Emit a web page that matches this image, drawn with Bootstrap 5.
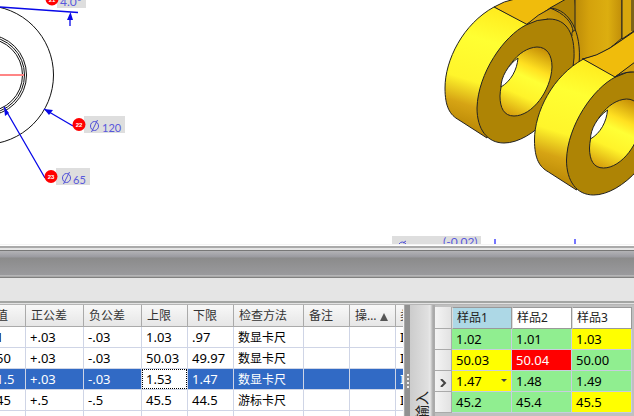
<!DOCTYPE html>
<html lang="zh-CN">
<head>
<meta charset="utf-8">
<meta name="viewport" content="width=device-width, initial-scale=1">
<title>检验数据</title>
<link href="https://cdn.jsdelivr.net/npm/bootstrap@5.3.0/dist/css/bootstrap.min.css" rel="stylesheet">
<style>
body{font-family:"Noto Sans","Noto Sans CJK SC",sans-serif;font-size:13px;line-height:16px;color:#000;background:#fff}
.viewer{height:244px;flex:none}
.viewer svg{display:block;width:100%;height:100%}
.dim{font-family:Lato,sans-serif;fill:#5858dc}
.num{font-family:"Liberation Sans",sans-serif;font-weight:bold;font-size:6px;fill:#fff;text-anchor:middle}
.trim{height:7px;flex:none;background:linear-gradient(#f4f4f4 0 1px,#fff 1px 2px,#aaa 2px 4px,#e5e5e5 4px 6px,#777 6px)}
.titlebar{height:27px;flex:none;background:linear-gradient(#b3b3b6,#9a9aa0 6px,#8b8b8b 7px,#9a9a9d 24px,#d0d0d0 25px,#808080 26px)}
.tools{height:23px;flex:none;background:#e5e5e5}
.rule{height:4px;flex:none;background:linear-gradient(#a3a5a3 0 2px,#e2e2e2 2px 3px,#b5b5b5 3px)}
.left-pane{width:405px;flex:none;border-right:1px solid #aaa;background:#f4f4f4}
.grid{table-layout:fixed;border-collapse:separate;border-spacing:0;white-space:nowrap}
.grid th,.grid td{overflow:hidden;padding:0 0 0 4px;font-weight:400}
.grid .cjk{padding-top:2px;font-size:12px}
.specs{width:403px;background:#fff}
.specs th{height:22px;padding-left:5px;font-size:12px;color:#333;background:linear-gradient(#f8f8f8,#e6e6e6);border-right:1px solid #aaa;border-bottom:1px solid #aaa}
.specs td{height:21px;border-right:1px solid #cfd5e6;border-bottom:1px solid #cfd5e6}
.specs .end{padding-left:4px;border-right:0}
.specs .first{padding-left:0}
.first span{display:block;margin-left:-4px}
.specs .picked td{background:#316ac5;color:#fff}
.specs .picked .editing{padding:0;background:#fff}
.editing input{display:block;width:100%;height:20px;padding:0 0 0 3px;border:1px dotted #000;outline:0;background:#fff;color:#000}
.sorter{display:inline-block;margin-left:3px;vertical-align:-1px}
.splitter{width:5px;flex:none;background:#919191}
.splitter i{display:block;width:2px;height:2px;margin:0 0 2px 2px;background:#eee}
.splitter i:first-child{margin-top:69px}
.side{width:24px;flex:none;padding-top:86px;background:linear-gradient(90deg,#ccc,#e0e0e0 18px,#e8e8e8 20px,#aaa 23px)}
.side button{display:block;width:16px;margin-left:4px;padding:0;border:0;background:none;color:#222;font-size:14px;line-height:16px;white-space:nowrap;writing-mode:vertical-rl;text-orientation:sideways;transform:rotate(180deg)}
.right-pane{min-width:0;padding-top:2px;border-left:1px solid #aaa;background:#c0c0c0}
.samples{width:197px}
.samples th,.samples td{height:21px;border-right:1px solid #c8cde0;border-bottom:1px solid #c8cde0;background:#90ee90}
.samples th{height:22px;font-size:12px;color:#222;background:#fff;border:1px solid #999;border-left-color:#ddd}
.samples th.on{background:#add8e6}
.samples .stub{padding:0;text-align:center;background:linear-gradient(90deg,#f4f4f4,#e2e2e2);border:0;border-right:1px solid #aaa;border-bottom:1px solid #aaa}
.samples .warn{background:#ff0}
.samples .bad{background:red;color:#fff}
.drop{width:15px;height:12px;padding:0;border:0;background:none}
.drop svg{display:block;margin:auto}
</style>
<script src="https://cdn.jsdelivr.net/npm/bootstrap@5.3.0/dist/js/bootstrap.bundle.min.js"></script>
</head>
<body>
<main class="d-flex flex-column vh-100 overflow-hidden">
<section class="viewer overflow-hidden" aria-label="图纸">
<svg viewBox="0 0 634 244" preserveAspectRatio="xMidYMin slice">
<defs>
<linearGradient id="rim" gradientUnits="userSpaceOnUse" x1="496" y1="12" x2="460" y2="128"><stop offset="0" stop-color="#ffed20"/><stop offset=".25" stop-color="#ffff32"/><stop offset=".6" stop-color="#fff52b"/><stop offset=".8" stop-color="#d6a414"/><stop offset="1" stop-color="#b98705"/></linearGradient>
<linearGradient id="bore" gradientUnits="userSpaceOnUse" x1="543" y1="48" x2="512" y2="116"><stop offset="0" stop-color="#c48c05"/><stop offset=".3" stop-color="#ffe021"/><stop offset=".45" stop-color="#ffff35"/><stop offset=".7" stop-color="#fff32a"/><stop offset="1" stop-color="#d69e0d"/></linearGradient>
<linearGradient id="shaft"><stop offset="0" stop-color="#bd8c08"/><stop offset=".3" stop-color="#d4a20c"/><stop offset=".7" stop-color="#dcae10"/><stop offset="1" stop-color="#c18e09"/></linearGradient>
<linearGradient id="fillet" x1="0" y1="1" x2="1" y2="0"><stop offset="0" stop-color="#ffe422"/><stop offset=".35" stop-color="#e2aa0c"/><stop offset="1" stop-color="#ae8205"/></linearGradient>
<g id="lug" stroke="#222" stroke-width="1">
<path fill="url(#rim)" d="M494 7C463 24 445 60 445 88C445 107 450 115 459 120L487 138L530 26Z"/>
<path fill="#ae8405" d="M526 25C504 36 478 73 477 108C477 129 487 143 504 143C532 143 571 104 574 58C575 34 567 19 549 19Q537 19 526 25Z"/>
<path fill="url(#bore)" d="M537 47C547 47 552 55 552 67C551 91 532 116 514 116C504 116 500 108 500 96C501 71 518 48 537 47Z"/>
<path fill="#fff" d="M518 58C508 65 501 77 501 87C511 81 517 70 518 58Z"/>
</g>
</defs>
<g fill="none" stroke="#111">
<circle cx="-16" cy="75" r="69.500"/>
<circle cx="-14" cy="75" r="36.500"/><circle cx="-14" cy="75" r="38.500"/><circle cx="-14" cy="75" r="40.500"/>
</g>
<path d="M0 75H24" stroke="#ff8585" stroke-width="2"/>
<g stroke="#0808e8" fill="#0808e8"><path d="M0 7L78 12.500M70 26V15M44 109L73 126M4 107L45 178" stroke-width="1.300" fill="none"/><path stroke="none" d="M70.500 12L73 20H67ZM44 109L53 110L49 115ZM4 107L9 113L5 116Z"/></g>
<g fill="#dedede"><path d="M57 0H86V8H57ZM84 116H125V133H84ZM56 168H90V185H56ZM392 236H481V244H392Z"/></g>
<g fill="red"><circle cx="52" cy="-1" r="6.500"/><circle cx="79" cy="124.500" r="6.500"/><circle cx="51" cy="176.500" r="6.500"/></g>
<g class="num"><text x="52" y="2">21</text><text x="79" y="127">22</text><text x="51" y="179">23</text></g>
<g class="dim" font-size="12"><text x="60" y="6">4.0°</text><text x="102" y="132" font-size="11">120</text><text x="73" y="184" font-size="11">65</text><text x="443" y="246">(-0.02)</text></g>
<g fill="none" stroke="#5050d8"><ellipse cx="94.500" cy="126" rx="4" ry="4.500"/><path d="M91.500 132L97.500 120"/><ellipse cx="66.500" cy="178" rx="4" ry="4.500"/><path d="M63.500 184L69.500 172M399 244Q402 240 406 244M403 243L406 241"/><path d="M495 239V244M575 239V244" stroke="#4848ff" stroke-width="1.500"/></g>
<g stroke="#222">
<path fill="#f0bc0c" d="M494 7Q504 1 515-1H634V66L584 60L526 25Z"/>
<path fill="#ae8205" d="M566-1L550 8L526 25L570 70H580L575-1Z"/>
<path fill="url(#shaft)" d="M575-1V68L596 60L622 38V-1Z"/>
<path fill="#d7a70e" d="M622-1V39L634 31V-1ZM632-1V31"/>
<path fill="url(#fillet)" d="M526 25Q538 14 551 8C569 10 582 31 579 64L574 66L548 19Z"/>
<path fill="none" d="M550 8C564 13 573 23 573 32M575 30Q571 31 572 36"/>
<path fill="#f0bc0c" d="M582 59Q597 57 610 48Q622 40 634 31V66L615 77Z"/>
</g>
<use href="#lug"/>
<use href="#lug" x="89.500" y="52"/>
<path fill="#f0bc0c" stroke="#222" d="M583 59Q597 56 610 48Q622 40 635 31V63L615 77Z"/>
<path fill="#d3a00d" stroke="#222" d="M615 77L635 62V72Q625 71 615 77Z"/>
</svg>
</section>
<div class="trim"></div><div class="titlebar"></div><div class="tools"></div><div class="rule"></div>
<section class="d-flex flex-grow-1 overflow-hidden">
<div class="left-pane overflow-hidden">
<table class="grid specs">
<colgroup><col style="width:26px"><col style="width:58px"><col style="width:58px"><col style="width:46px"><col style="width:46px"><col style="width:70px"><col style="width:46px"><col style="width:46px"><col style="width:7px"></colgroup>
<thead><tr><th class="first"><span>值</span></th><th>正公差</th><th>负公差</th><th>上限</th><th>下限</th><th>检查方法</th><th>备注</th><th>操…<svg class="sorter" width="8" height="8" viewBox="0 0 8 8"><path d="M4 0L8 8H0Z" fill="#555"/></svg></th><th class="end">类</th></tr></thead>
<tbody>
<tr><td class="first"><span>1</span></td><td>+.03</td><td>-.03</td><td>1.03</td><td>.97</td><td class="cjk">数显卡尺</td><td></td><td></td><td class="end">I</td></tr>
<tr><td class="first"><span>50</span></td><td>+.03</td><td>-.03</td><td>50.03</td><td>49.97</td><td class="cjk">数显卡尺</td><td></td><td></td><td class="end">I</td></tr>
<tr class="picked"><td class="first"><span>1.5</span></td><td>+.03</td><td>-.03</td><td class="editing"><input type="text" value="1.53" aria-label="上限"></td><td>1.47</td><td class="cjk">数显卡尺</td><td></td><td></td><td class="end">I</td></tr>
<tr><td class="first"><span>45</span></td><td>+.5</td><td>-.5</td><td>45.5</td><td>44.5</td><td class="cjk">游标卡尺</td><td></td><td></td><td class="end">I</td></tr>
<tr><td></td><td></td><td></td><td></td><td></td><td></td><td></td><td></td><td class="end"></td></tr>
</tbody></table>
</div>
<div class="splitter"><i></i><i></i><i></i><i></i></div>
<div class="side"><button type="button">输入</button></div>
<div class="right-pane flex-grow-1 overflow-hidden">
<table class="grid samples">
<colgroup><col style="width:17px"><col style="width:60px"><col style="width:60px"><col style="width:60px"></colgroup>
<thead><tr><th class="stub"></th><th class="on">样品1</th><th>样品2</th><th>样品3</th></tr></thead>
<tbody>
<tr><td class="stub"></td><td>1.02</td><td>1.01</td><td class="warn">1.03</td></tr>
<tr><td class="stub"></td><td class="warn">50.03</td><td class="bad">50.04</td><td>50.00</td></tr>
<tr><td class="stub"><svg width="7" height="8" viewBox="0 0 7 8"><path d="M1 0L5 4L1 8" fill="none" stroke="#444" stroke-width="2"/></svg></td><td class="warn"><div class="d-flex align-items-center justify-content-between"><span>1.47</span><button class="drop" type="button" aria-label="选择"><svg width="6" height="4" viewBox="0 0 6 4"><path d="M0 0H6L3 3Z" fill="#444"/></svg></button></div></td><td>1.48</td><td>1.49</td></tr>
<tr><td class="stub"></td><td>45.2</td><td>45.4</td><td class="warn">45.5</td></tr>
</tbody></table>
</div>
</section>
</main>
</body>
</html>
